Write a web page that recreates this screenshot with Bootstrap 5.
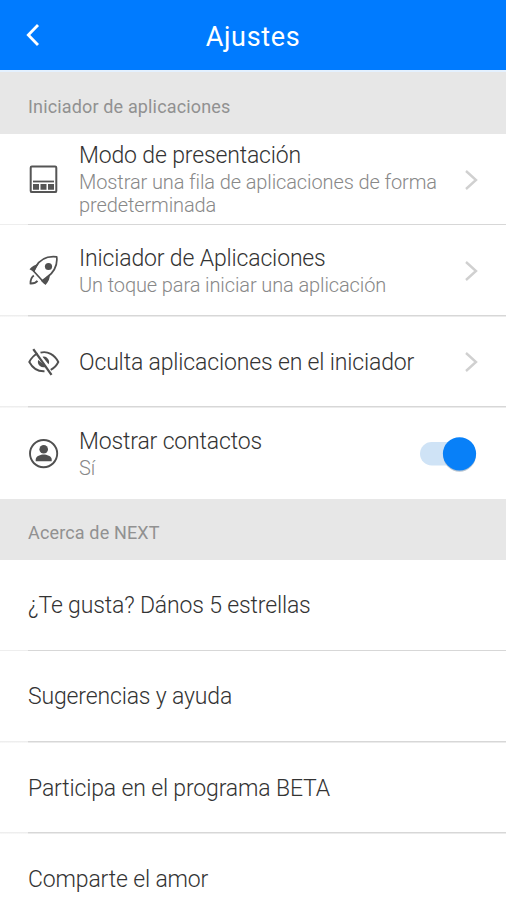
<!DOCTYPE html>
<html lang="es">
<head>
<meta charset="utf-8">
<meta name="viewport" content="width=device-width, initial-scale=1">
<title>Ajustes</title>
<link href="https://cdn.jsdelivr.net/npm/bootstrap@5.3.0/dist/css/bootstrap.min.css" rel="stylesheet">
<style>
body{font-family:Roboto,"Liberation Sans",sans-serif;color:#333;height:900px;font-weight:300}
.topbar{height:72px;background:#007bff;border-bottom:2px solid #e4f1ff;display:grid;grid-template-columns:66px 1fr 66px}
.topbar h1{font-size:27px;font-weight:400;letter-spacing:.65px;line-height:32px;padding-top:3px}
.section-head{height:62px;padding:7px 28px 0;background:#e7e7e7;color:#919191;font-size:18px;font-weight:400;letter-spacing:.15px}
.section-head.second{height:60.8px;padding-top:6px}
.setting{height:91.3px;padding:0 27px 0 28px}
.setting:not(:last-child){background:linear-gradient(90deg,#eee 28px,#d7d7d7 28px) bottom/100% 1.5px no-repeat}
.glyph{width:32px;height:32px;margin-right:19px;flex:none}
.title{font-size:23px;line-height:27px;letter-spacing:-.15px}
.detail{font-size:20px;line-height:23px;letter-spacing:-.11px;color:#888;margin-top:2px}
.toggle{width:57px;height:36px;margin-right:2px}
</style>
</head>
<body class="bg-white overflow-hidden">
<header class="topbar align-items-center text-white">
  <a href="#" class="text-white d-flex" aria-label="Atrás"><svg width="66" height="40" fill="none" stroke="#fff" stroke-width="2.8"><path d="M38 10 28.3 20 38 30"/></svg></a>
  <h1 class="m-0 text-center">Ajustes</h1>
</header>
<div class="section-head d-flex align-items-center">Iniciador de aplicaciones</div>
<section>
  <div class="setting d-flex align-items-center">
    <svg class="glyph" viewBox="0 0 32 32"><rect x="2.700" y="2.500" width="25.600" height="25.600" rx="1.200" fill="none" stroke="#555" stroke-width="2"/><path d="M5 17.500h21" stroke="#555" stroke-width="1.800"/><path fill="#555" d="M5 20.100h6v5.700H5zm7.500 0h6v5.700h-6zm7.500 0h6v5.700h-6z"/></svg>
    <div class="flex-grow-1"><div class="title">Modo de presentación</div><div class="detail">Mostrar una fila de aplicaciones de forma predeterminada</div></div>
    <svg class="flex-shrink-0" width="16" height="24" fill="none" stroke="#d0d0d0" stroke-width="2.400"><path d="M3 3l10 9-10 9"/></svg>
  </div>
  <div class="setting d-flex align-items-center">
    <svg class="glyph" viewBox="0 0 32 32" fill="#505050"><path d="M7.500 12C12 4 20 .800 28.700 1.800c1 8-2.500 15.300-10 21L16.500 28 5.500 16z" fill="none" stroke="#505050" stroke-width="1.700" stroke-linejoin="round"/><circle cx="20.500" cy="11.500" r="3.600"/><path d="M1.500 14.300C4 11.500 7 9.500 10.500 9L6.200 17zM12.800 25.800l9-6.800c.3 4-1.300 8-4.300 11z"/><path d="M5.800 20.500c-2.600 2-3.400 5-3.300 8 3 .1 5.600-.8 7-2.600" fill="none" stroke="#505050" stroke-width="1.800"/></svg>
    <div class="flex-grow-1"><div class="title">Iniciador de Aplicaciones</div><div class="detail">Un toque para iniciar una aplicación</div></div>
    <svg class="flex-shrink-0" width="16" height="24" fill="none" stroke="#d0d0d0" stroke-width="2.400"><path d="M3 3l10 9-10 9"/></svg>
  </div>
  <div class="setting d-flex align-items-center">
    <svg class="glyph" viewBox="0 0 32 32" fill="none" stroke="#505050" stroke-width="1.900"><path d="M9.500 7.500C5.500 9.500 3 12.500 1.300 16c3.500 6.500 9 9.600 15.200 9.300M12.500 6.700c7-2 14.200 2 17.800 9.300-1.700 3.500-4.200 6.200-7.600 7.900"/><path d="M10.200 14a5.500 5.500 0 0 0 8 6.500zM14.500 10.800a5.300 5.300 0 0 1 6 7.500z" fill="#505050" stroke="none"/><path d="M5.300 3.200 23.500 28.800" stroke-width="2.300"/></svg>
    <div class="flex-grow-1"><div class="title">Oculta aplicaciones en el iniciador</div></div>
    <svg class="flex-shrink-0" width="16" height="24" fill="none" stroke="#d0d0d0" stroke-width="2.400"><path d="M3 3l10 9-10 9"/></svg>
  </div>
  <div class="setting d-flex align-items-center">
    <svg class="glyph" viewBox="0 0 32 32"><circle cx="15.600" cy="15.600" r="13.600" fill="none" stroke="#505050" stroke-width="1.900"/><circle cx="15.700" cy="11.300" r="4.300" fill="#505050"/><path fill="#505050" d="M7.700 23.300v-1.800c0-3.400 5.200-4.900 8-4.900s8 1.500 8 4.900v1.800z"/></svg>
    <div class="flex-grow-1"><div class="title">Mostrar contactos</div><div class="detail">Sí</div></div>
    <svg class="toggle flex-shrink-0" viewBox="0 0 57 36" role="switch" aria-checked="true"><rect x="0" y="6" width="48" height="23.500" rx="11.700" fill="#cfe3f6"/><circle cx="39.500" cy="19.200" r="16.500" fill="#b8c4d0"/><circle cx="39.500" cy="17.800" r="16.600" fill="#0880f8"/></svg>
  </div>
</section>
<div class="section-head second d-flex align-items-center">Acerca de NEXT</div>
<section>
  <div class="setting d-flex align-items-center"><div class="title">¿Te gusta? Dános 5 estrellas</div></div>
  <div class="setting d-flex align-items-center"><div class="title">Sugerencias y ayuda</div></div>
  <div class="setting d-flex align-items-center"><div class="title">Participa en el programa BETA</div></div>
  <div class="setting d-flex align-items-center"><div class="title">Comparte el amor</div></div>
</section>
<script src="https://cdn.jsdelivr.net/npm/bootstrap@5.3.0/dist/js/bootstrap.bundle.min.js"></script>
</body>
</html>
